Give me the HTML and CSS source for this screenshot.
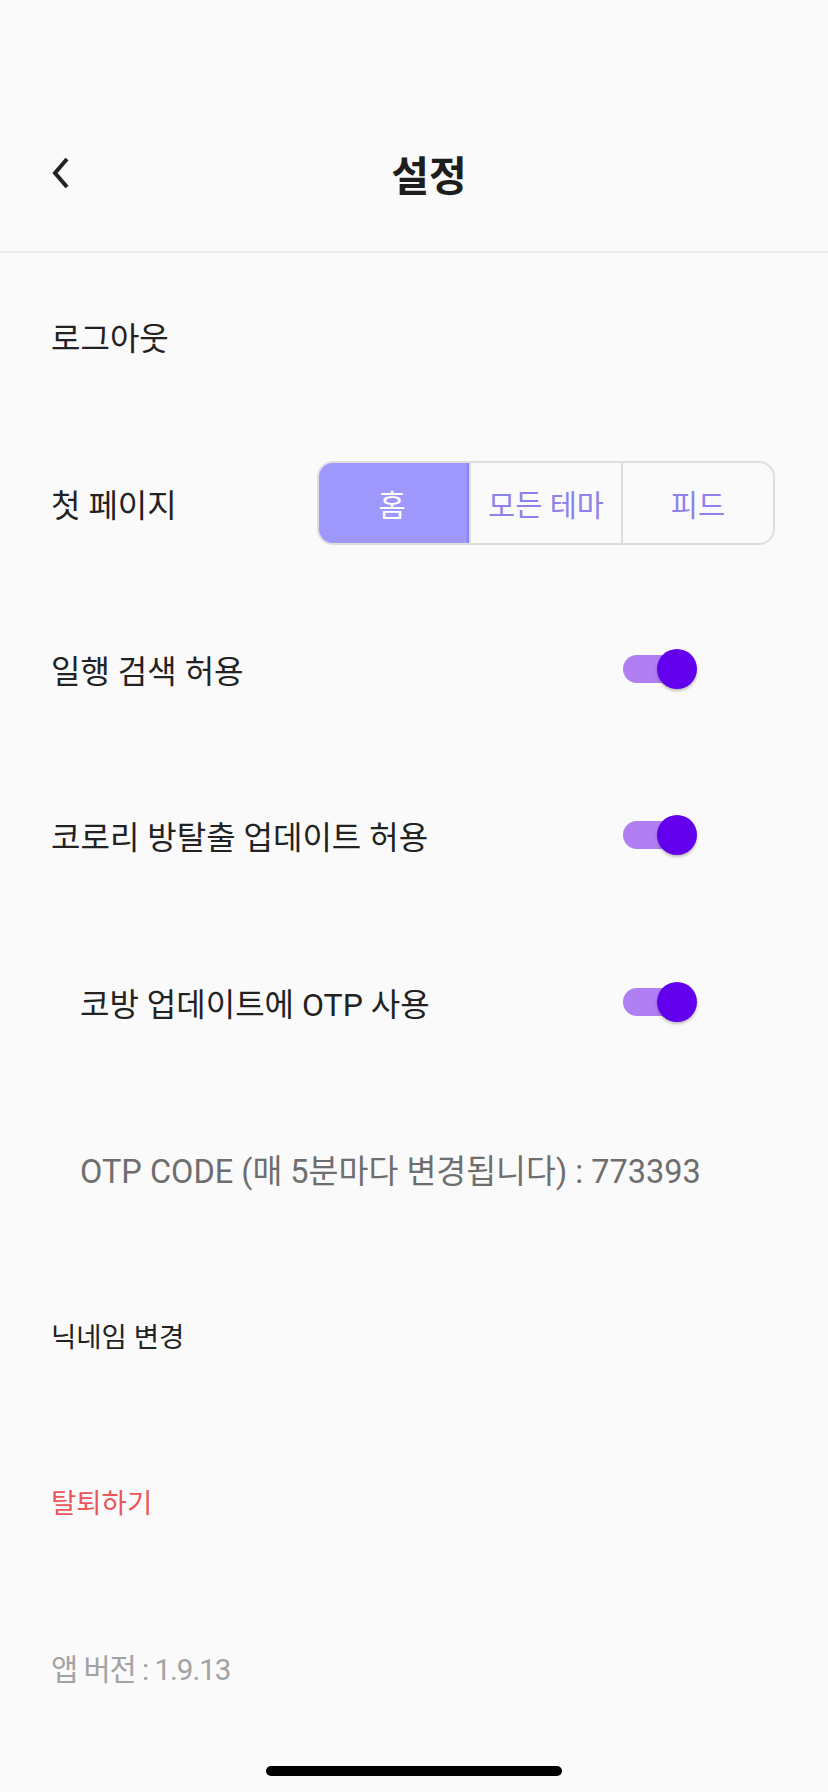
FILE: index.html
```html
<!DOCTYPE html>
<html lang="ko">
<head>
<meta charset="utf-8">
<title>설정</title>
<link rel="stylesheet" href="styles.css">
</head>
<body>
<div class="screen">
  <header class="appbar">
    <button class="back" aria-label="뒤로">
      <svg width="24" height="32" viewBox="0 0 24 32"><path d="M18 2 L6 16 L18 30" fill="none" stroke="#222" stroke-width="4" stroke-linecap="butt" stroke-linejoin="miter"/></svg>
    </button>
    <h1 class="title">설정</h1>
  </header>
  <main class="list">
    <div class="row"><span class="label">로그아웃</span></div>
    <div class="row">
      <span class="label">첫 페이지</span>
      <div class="segmented">
        <span class="seg seg-active">홈</span>
        <span class="seg">모든 테마</span>
        <span class="seg">피드</span>
      </div>
    </div>
    <div class="row">
      <span class="label">일행 검색 허용</span>
      <span class="switch"><span class="track"></span><span class="thumb"></span></span>
    </div>
    <div class="row">
      <span class="label">코로리 방탈출 업데이트 허용</span>
      <span class="switch"><span class="track"></span><span class="thumb"></span></span>
    </div>
    <div class="row row-indent">
      <span class="label">코방 업데이트에 OTP 사용</span>
      <span class="switch"><span class="track"></span><span class="thumb"></span></span>
    </div>
    <div class="row row-indent">
      <span class="label label-otp">OTP CODE (매 5분마다 변경됩니다) : 773393</span>
    </div>
    <div class="row"><span class="label label-small">닉네임 변경</span></div>
    <div class="row"><span class="label label-small label-danger">탈퇴하기</span></div>
    <div class="row"><span class="label label-version">앱 버전 : 1.9.13</span></div>
  </main>
  <div class="home-bar"><span class="home-indicator"></span></div>
</div>
</body>
</html>
```
FILE: styles.css
```css
html, body {
  margin: 0;
  padding: 0;
  background: #fafafa;
}
body {
  font-family: Roboto, "Noto Sans CJK KR", sans-serif;
  color: #222222;
}
.screen {
  width: 828px;
  height: 1792px;
  display: flex;
  flex-direction: column;
  overflow: hidden;
}
.appbar {
  height: 253px;
  box-sizing: border-box;
  border-bottom: 2px solid #ececec;
  display: flex;
  align-items: center;
  padding: 94px 0 0 0;
}
.back {
  background: none;
  border: 0;
  padding: 0;
  margin-left: 46px;
  width: 30px;
  height: 34px;
  display: flex;
  align-items: center;
  justify-content: center;
}
.title {
  flex: 1;
  margin: 0;
  text-align: center;
  font-size: 41px;
  font-weight: 700;
  color: #1e1e1e;
  padding-right: 46px;
}
.list {
  display: flex;
  flex-direction: column;
}
.row {
  height: 166.4px;
  display: flex;
  align-items: center;
  justify-content: space-between;
  padding: 0 53px 0 51px;
}
.row-indent {
  padding-left: 80px;
}
.label {
  font-size: 32px;
  color: #222222;
}
.label-small {
  font-size: 27.5px;
}
.label-otp {
  color: #6e6e6e;
  font-size: 32.5px;
}
.label-danger {
  color: #e9575a;
}
.label-version {
  color: #a2a2a2;
  font-size: 29.5px;
  letter-spacing: -1px;
}
.segmented {
  display: flex;
  width: 458px;
  height: 84px;
  box-sizing: border-box;
  border: 2px solid #dddddd;
  border-radius: 16px;
  overflow: hidden;
}
.seg {
  flex: 1;
  display: flex;
  align-items: center;
  justify-content: center;
  font-size: 29.5px;
  color: #8e82ea;
  border-left: 2px solid #dddddd;
}
.seg:first-child {
  border-left: 0;
}
.seg-active {
  background: #9e97fc;
  color: #ffffff;
  margin: -2px 0 -2px -2px;
  border: 2px solid #8b83f4;
  border-radius: 16px 0 0 16px;
}
.switch {
  position: relative;
  width: 74px;
  height: 40px;
  margin-right: 78px;
  display: flex;
  align-items: center;
}
.track {
  width: 68px;
  height: 28px;
  border-radius: 14px;
  background: #b07ff3;
}
.thumb {
  position: absolute;
  right: 0;
  top: 0;
  width: 40px;
  height: 40px;
  border-radius: 50%;
  background: #6200ee;
  box-shadow: 0 2px 3px rgba(0,0,0,0.25);
}
.home-bar {
  flex: 1;
  display: flex;
  justify-content: center;
  align-items: flex-end;
  padding-bottom: 16px;
}
.home-indicator {
  width: 296px;
  height: 10px;
  border-radius: 5px;
  background: #000000;
}
```
